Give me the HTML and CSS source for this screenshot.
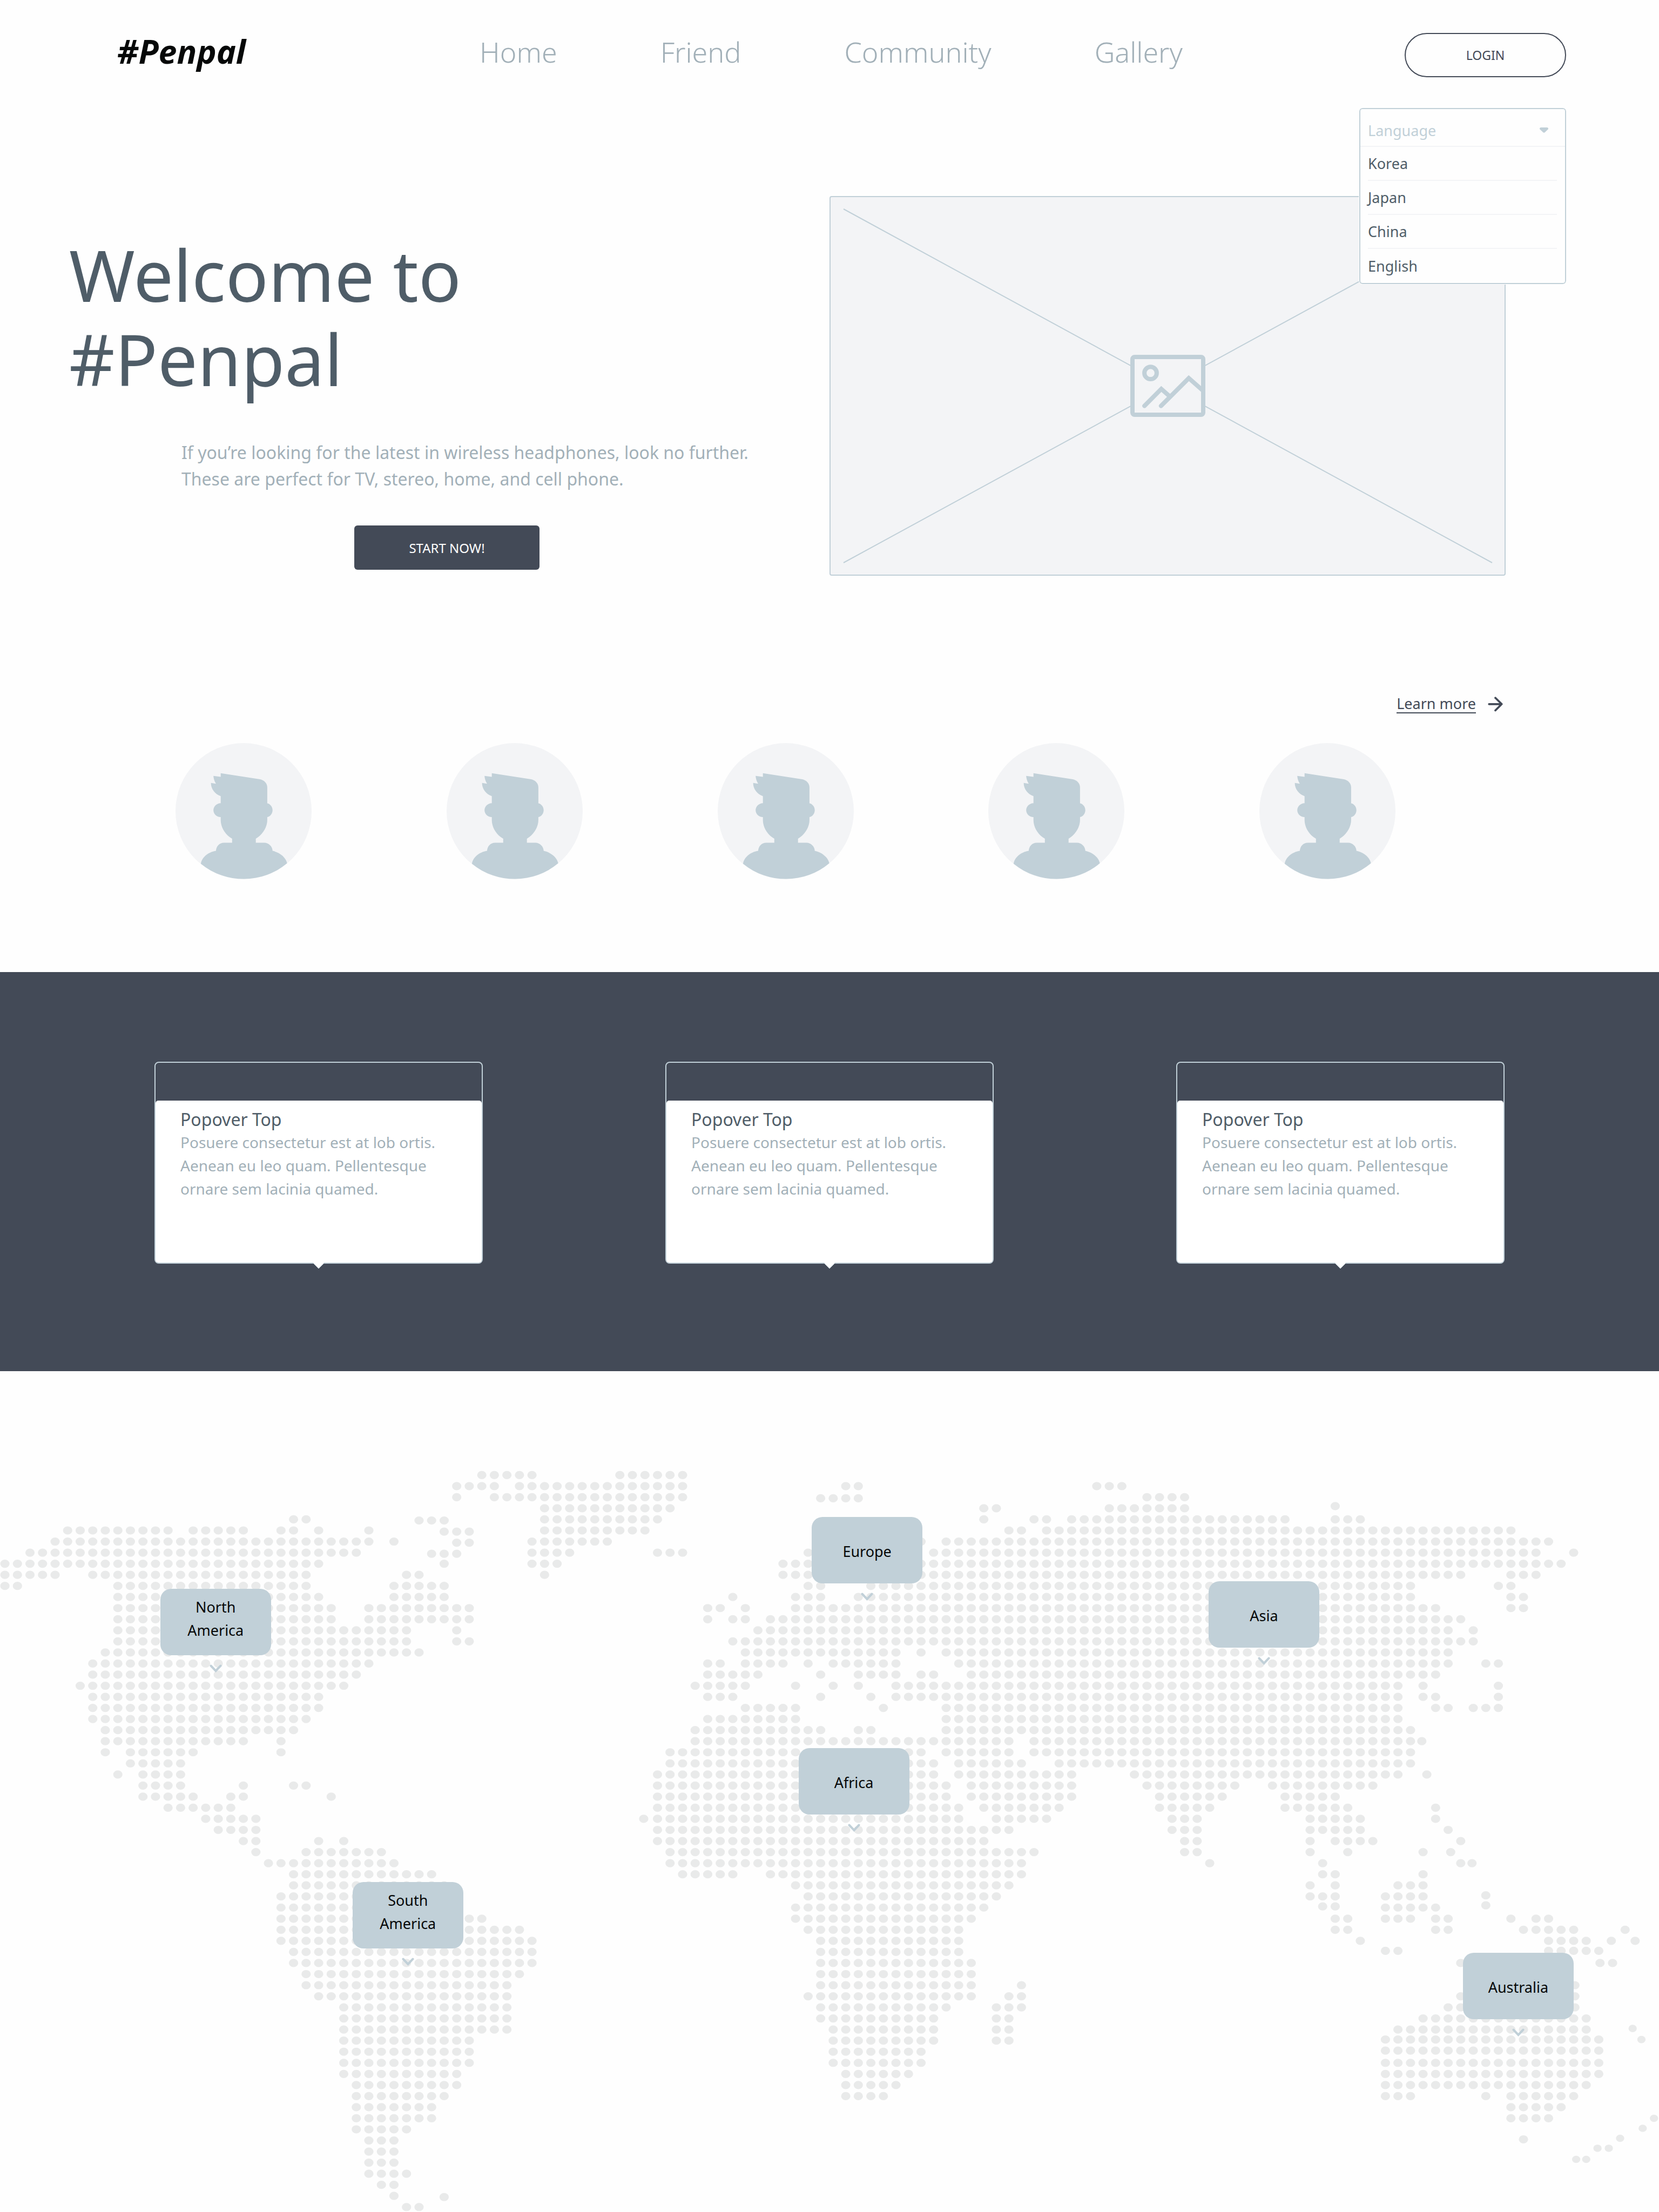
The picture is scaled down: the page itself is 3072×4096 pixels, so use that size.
FILE: index.html
```html
<!DOCTYPE html>
<html lang="en">
<head>
<meta charset="utf-8">
<meta name="viewport" content="width=device-width, initial-scale=1">
<title>#Penpal</title>
<link rel="stylesheet" href="styles.css">
</head>
<body>
<svg class="sprite" aria-hidden="true">
  <symbol id="avatar" viewBox="0 0 252 252">
    <circle class="avatar-bg" cx="126" cy="126" r="126"/>
    <path class="avatar-person" d="M83.7 55.8 156.5 66.9C164 68.500 169.900 74 169.900 81.800V111.400C175.500 112.500 179.700 118 179.700 124.200S175.500 136 169.900 136.900V142.500C169.900 155 162 169 148.700 177.100V184.400H164.700C172 184.400 179.700 191 179.700 199.600C192 202 204.500 211 206.600 222.600A126 126 0 0 1 47 223.600C48.500 212 60 202 74.900 199.600C75.500 191 81 184.400 89.900 184.400H104.800V177.100C91 169 83.700 155 83.700 142.500V137.100C76 137 70.200 131 70.200 124.200S76 111.500 83.700 111.200V98.200C73 94.500 65.600 85 65.600 73.700L74.900 75.200C72 70.500 70.500 66 70.200 60.700L83.700 62.400Z"/>
  </symbol>
  <symbol id="chevron" viewBox="0 0 23 15">
    <path d="M2.500 2.500 11.500 12 20.500 2.500" fill="none" stroke="currentColor" stroke-width="4" stroke-linecap="round"/>
  </symbol>
</svg>

<header class="header">
  <a class="logo" href="#">#Penpal</a>
  <nav class="nav" aria-label="Main">
    <a href="#">Home</a>
    <a href="#">Friend</a>
    <a href="#">Community</a>
    <a href="#">Gallery</a>
  </nav>
  <button class="login" type="button">LOGIN</button>

  <div class="language">
    <div class="language-head">
      <select class="language-select" aria-label="Language">
        <option>Language</option>
      </select>
      <svg class="caret" viewBox="0 0 16 10" aria-hidden="true"><path d="M2 0H14Q17 1 15.500 3.500L10 8.800Q8 10.500 6 8.800L.5 3.500Q-1 1 2 0Z"/></svg>
    </div>
    <ul class="language-list">
      <li><button type="button">Korea</button></li>
      <li><button type="button">Japan</button></li>
      <li><button type="button">China</button></li>
      <li><button type="button">English</button></li>
    </ul>
  </div>
</header>

<main>
  <section class="hero">
    <div class="hero-text">
      <h1>Welcome to<br>#Penpal</h1>
      <p>If you’re looking for the latest in wireless headphones, look no further. These are perfect for TV, stereo, home, and cell phone.</p>
      <button class="start" type="button">START NOW!</button>
    </div>
    <svg class="hero-image" viewBox="0 0 1252 703" role="img" aria-label="Image placeholder">
      <rect class="frame" x="1" y="1" width="1250" height="701" rx="3"/>
      <path class="thin" d="M26 24 1227 679M26 679 1227 24"/>
      <g class="thick">
        <rect class="frame-inner" x="561" y="298" width="131" height="107" rx="4"/>
        <circle cx="594.500" cy="327.700" r="11.400"/>
        <path d="M583.200 388.600 614.400 357.200 630 371M613.900 388.600 665.300 337.300 690 359"/>
      </g>
    </svg>
  </section>

  <section class="people" aria-label="Members">
    <a class="more" href="#"><span>Learn more</span>
      <svg viewBox="0 0 112 110" aria-hidden="true"><path d="M9 54H102M56 8 103 54 56 101"/></svg>
    </a>
    <ul class="avatars">
      <li><svg role="img" aria-label="Member"><use href="#avatar"/></svg></li>
      <li><svg role="img" aria-label="Member"><use href="#avatar"/></svg></li>
      <li><svg role="img" aria-label="Member"><use href="#avatar"/></svg></li>
      <li><svg role="img" aria-label="Member"><use href="#avatar"/></svg></li>
      <li><svg role="img" aria-label="Member"><use href="#avatar"/></svg></li>
    </ul>
  </section>

  <section class="popovers">
    <article class="popover">
      <div class="popover-body">
        <h2>Popover Top</h2>
        <p>Posuere consectetur est at lob ortis. Aenean eu leo quam. Pellentesque ornare sem lacinia quamed.</p>
      </div>
      <svg class="popover-tip" viewBox="0 0 22 12" aria-hidden="true"><path d="M0 0 11 11 22 0"/></svg>
    </article>
    <article class="popover">
      <div class="popover-body">
        <h2>Popover Top</h2>
        <p>Posuere consectetur est at lob ortis. Aenean eu leo quam. Pellentesque ornare sem lacinia quamed.</p>
      </div>
      <svg class="popover-tip" viewBox="0 0 22 12" aria-hidden="true"><path d="M0 0 11 11 22 0"/></svg>
    </article>
    <article class="popover">
      <div class="popover-body">
        <h2>Popover Top</h2>
        <p>Posuere consectetur est at lob ortis. Aenean eu leo quam. Pellentesque ornare sem lacinia quamed.</p>
      </div>
      <svg class="popover-tip" viewBox="0 0 22 12" aria-hidden="true"><path d="M0 0 11 11 22 0"/></svg>
    </article>
  </section>

  <section class="world" aria-label="Regions">
    <div class="map">
      <!-- One unit per dot: each run is a row of round dashes. -->
      <svg class="dots" viewBox="-0.39 -0.55 132.190 67" preserveAspectRatio="none" aria-hidden="true">
        <path d="
M38 0h4.100M49 0h5.100
M36 1h3.100M41 1h13.100M67 1h1.100M87 1h2.100
M36 2h.1M39 2h15.100M65 2.100h3.100M91 2h3.100
M43 3h10.100M78 3h1.100M88 3h6.100M106 2.800h.1
M23 4h1.100M33 4.100h2.100M43 4h9.100M78 4h.1M82 4h1.100M85 4h17.100M106 4h2.100
M5 5h8.100M15 5h4.100M22 5h1.100M25 5h.1M29 5h.1M35 5.100h2.100M43 5h8.100M80 5h1.100M83 5h37.100
M4 6h25.100M31 6h.1M36 6.100h1.100M42 6h6.100M73 6h.1M75 6h48.100
M2 7h26.100M34 7.100h2.100M42 7h3.100M52 7h2.100M64 7h.1M74 7h48.100M125 7h.1
M0 8h25.100M35 8h.1M42 8h2.100M62 8h2.100M73 8h51.100
M0 9h4.100M7 9h17.100M32 9h1.100M43 9h.1M62 9h2.100M73 9h43.100M120 9h2.100
M0 10h1.100M9 10h15.100M31 10h4.100M64 10h1.100M69 10h43.100M119 10h1.100
M9 11h16.100M31 11h4.100M58 11h.1M63 11h2.100M68 11h44.100M120 11h1.100
M9 12h17.100M29 12h8.100M56 12h1.100M59 12h.1M63 12h51.100M120 12h1.100
M9 13h17.100M29 13h8.100M56 13h.1M58 13h1.100M61 13h55.100
M9 14h23.100M36 14h.1M60 14h55.100M117 14h.1
M9 15h23.100M36 15h1.100M58 15h59.100
M8 16h25.100M59 16h12.100M73 16h.1M75 16h40.100
M7 17h22.100M56 17h1.100M59 17h3.100M64 17h.1M66 17h5.100M76 17h39.100M118 17h1.100
M7 18h21.100M56 18h4.100M65 18h.1M68 18h3.100M73 18h1.100M77 18h37.100
M6 19h21.100M55 19h4.100M63 19h.1M66 19h.1M68 19h.1M71 19h40.100M113 19h.1M119 19h.1
M7 20h18.100M56 20h2.100M65 20h.1M69 20h.1M71 20h40.100M113 20h1.100M119 20h.1
M7 21h18.100M59 21h4.100M70 21h.1M75 21h36.100M114 21h1.100M117 21h2.100
M7 22h17.100M56 22h7.100M75 22h36.100
M8 23h15.100M55 23h10.100M68 23h1.100M75 23h37.100
M8 24h11.100M22 24h.1M55 24h19.100M75 24h5.100M82 24h30.100M112.900 24h.1
M8 25h.1M10 25h5.100M22 25h.1M53 25h20.100M75 25h5.100M82 25h30.100
M10 26h4.100M53 26h21.100M76 26h5.100M84 26h28.100
M9 27h.1M11 27h3.100M52 27h22.100M76 27h9.100M90 27h21.100M113.300 27h.1
M11 28h3.100M19 28h.1M23 28h1.100M52 28h23.100M77 28h8.100M91 28h7.100M101 28h8.100
M11 29h4.100M18 29h1.100M26 29h.1M52 29h23.100M77 29h8.100M92 29h5.100M102 29h4.100
M13 30h5.100M52 30h24.100M78 30h6.100M92 30h4.100M102 30h5.100M114 30h.1
M16 31h4.100M50.900 31h.1M52 31h24.100M79 31h4.100M93 31h2.100M104 31h4.100M114 31h.1
M17 32h3.100M52 32h28.100M93 32h2.100M104 32h4.100M115 32h.1
M19 33h1.100M25 33h.1M27 33h.1M52 33h26.100M94 33h1.100M104 33h.1M106 33h3.100M116 33h.1
M20 34h.1M24 34h6.100M53 34h29.100M94 34h1.100M104 34h.1M107 34h.1M113 34h.1M115.200 34h.1
M21 35h10.100M53 35h28.100M96 35h.1M105 35h.1M116 35h.9M116.900 35h.1
M23 36h11.100M54 36h4.100M61 36h20.100M105 36h1.100M113 36h.1
M23 37h12.100M63 37h17.100M104 37h.1M106 37h.1M111 37h2.100
M22 38h13.100M64 38h15.100M104 38h2.100M110 38h3.100M118 37.900h.1
M22 39h13.100M63 39h15.100M105 38.900h1.100M110 39h4.100M118 38.800h.1
M22 40h16.100M63 40h14.100M106 40h1.100M110 40h2.100M114 40h1.100M120 40h.1M122 40h1.100
M22 41h19.100M64 41h12.100M106 41h1.100M114 41h1.100M121 41h4.100M129.100 41h.1
M22 42h20.100M65 42h11.100M108 42h.1M123 42h3.100M128 42h.1M129.900 42h.1
M23 43h19.100M65 43h11.100M110 42.900h1.100M123 42.900h4.100
M23 44h19.100M65 44h12.100M116 44h.1M127.100 44h1.100
M24 45h17.100M65 45h12.100
M24 46h16.100M65 46h12.100M81 46h.1M125.100 46h.1
M25 47h15.100M64 47h13.100M80 47h1.100M116 47h.1M125.100 47h.1
M27 48h13.100M65 48h10.100M79 48h2.100M115 48h1.100M125.100 48h.1
M27 49h13.100M65 49h9.100M79 49h1.100M113 49h13.100
M27 50h13.100M66 50h8.100M79 50h1.100M111 50h15.100
M27 51h10.100M66 51h8.100M79 51h1.100M110 50.900h17.100
M27 52h10.100M66 52h7.100M110 51.900h17.100
M27 53h10.100M66 53h7.100M110 53h17.100
M27 54h9.100M67 54h5.100M110 54h17.100
M28 55h8.100M67 55h4.100M110 55h16.100
M28 56h7.100M67 56h3.100M110 56h2.100M118 56h.1M120 56h5.100
M28 57h6.100M120 57h4.100
M28 58h6.100M120 58h3.100
M28 59h4.100
M29 60h2.100M121 59.900h.1
M29 61h2.100
M29 62h2.100
M29 63h3.100
M30 64h1.100
M31 65h.1M35 65.100h.1
M32 66h1.100"/>
        <path class="dots-small" d="M129.700 49.900h.1M130.400 50.900h.1M131.400 58h.1M130.500 58.900h.1M128.700 59.800h.1M126.900 60.700h.1M127.800 60.700h.1M125.200 61.700h.1M126 61.700h.1"/>
      </svg>

      <div class="pin pin-north-america"><button type="button">North<br>America</button><svg aria-hidden="true"><use href="#chevron"/></svg></div>
      <div class="pin pin-europe"><button type="button">Europe</button><svg aria-hidden="true"><use href="#chevron"/></svg></div>
      <div class="pin pin-asia"><button type="button">Asia</button><svg aria-hidden="true"><use href="#chevron"/></svg></div>
      <div class="pin pin-africa"><button type="button">Africa</button><svg aria-hidden="true"><use href="#chevron"/></svg></div>
      <div class="pin pin-south-america"><button type="button">South<br>America</button><svg aria-hidden="true"><use href="#chevron"/></svg></div>
      <div class="pin pin-australia"><button type="button">Australia</button><svg aria-hidden="true"><use href="#chevron"/></svg></div>
    </div>
  </section>
</main>
</body>
</html>
```
FILE: styles.css
```css
:root {
  --ink: #4f5d68;
  --navy: #434a57;
  --mist: #c1d0d8;
  --muted: #a2b0b8;
  --paper: #fefefe;
  --panel: #f3f4f6;
}

* { box-sizing: border-box; }

body {
  margin: 0;
  background: var(--paper);
  color: var(--ink);
  font-family: "Noto Sans", "Open Sans", sans-serif;
}

h1, h2, p, ul { margin: 0; padding: 0; font-weight: 400; }
ul { list-style: none; }
a { color: inherit; text-decoration: none; }
button, select { margin: 0; padding: 0; border: 0; background: none; color: inherit; font: inherit; cursor: pointer; }
svg { display: block; }
.sprite { position: absolute; width: 0; height: 0; }

/* Header */
.header {
  position: relative;
  display: flex;
  align-items: flex-start;
  padding: 61px 172px 0 217px;
}
.logo {
  margin-right: 433px;
  color: #060808;
  font-size: 61px;
  font-style: italic;
  font-weight: 700;
  line-height: 68px;
}
.nav {
  display: flex;
  gap: 191px;
  color: var(--muted);
  font-size: 52px;
  font-weight: 300;
  line-height: 70px;
}
.login {
  width: 299px;
  height: 82px;
  margin-left: auto;
  border: 2px solid var(--navy);
  border-radius: 41px;
  color: var(--navy);
  font-size: 23px;
}

/* Language menu, open over the hero */
.language {
  position: absolute;
  z-index: 1;
  top: 200px;
  right: 172px;
  width: 383px;
  border: 2px solid var(--mist);
  border-radius: 6px;
  outline: 1px solid var(--paper);
  background: var(--paper);
  font-size: 27px;
}
.language-head {
  display: flex;
  align-items: center;
  padding-right: 31px;
  border-bottom: 2px solid var(--panel);
}
.language-select {
  flex: 1;
  height: 68px;
  padding: 10px 0 0 14px;
  appearance: none;
  color: var(--mist);
}
.caret { width: 16px; height: 10px; margin-top: 10px; fill: var(--mist); }
.language-list { padding: 0 15px 0 14px; }
.language-list li { height: 63px; border-bottom: 2px solid var(--panel); }
.language-list li:last-child { border-bottom: 0; }
.language-list button { width: 100%; height: 100%; text-align: left; }

/* Hero */
.hero {
  display: grid;
  grid-template-columns: 1408fr 1252fr;
  align-items: start;
  padding: 220px 284px 0 128px;
}
.hero-text { padding-top: 67px; }
.hero h1 { font-size: 131px; line-height: 156px; }
.hero p {
  max-width: 1280px;
  margin-top: 71px;
  padding-left: 208px;
  color: var(--muted);
  font-size: 32px;
  line-height: 49px;
}
.start {
  display: block;
  width: 343px;
  height: 82px;
  margin: 62px 0 0 528px;
  border-radius: 6px;
  background: var(--navy);
  color: var(--paper);
  font-size: 24px;
}
.hero-image { width: 100%; }
.frame { fill: var(--panel); stroke: var(--mist); stroke-width: 2; }
.thin { stroke: var(--mist); stroke-width: 2; }
.thick { fill: none; stroke: var(--mist); stroke-width: 8; stroke-linecap: round; }
.frame-inner { fill: var(--panel); }

/* Members */
.people { padding: 220px 289px 172px; }
.more {
  display: flex;
  align-items: center;
  gap: 22px;
  width: max-content;
  margin-left: auto;
  color: var(--navy);
  font-size: 27px;
  line-height: 33px;
}
.more span { border-bottom: 2px solid; }
.more svg { width: 28px; height: 28px; fill: none; stroke: currentColor; stroke-width: 15; stroke-linecap: round; stroke-linejoin: round; }
.avatars {
  display: flex;
  justify-content: space-between;
  margin-top: 55px;
  padding: 0 199px 0 36px;
}
.avatars svg { width: 252px; height: 252px; }
.avatar-bg { fill: var(--panel); }
.avatar-person { fill: var(--mist); }

/* Popovers */
.popovers {
  display: grid;
  grid-template-columns: repeat(3, 1fr);
  gap: 338px;
  padding: 166px 286px 199px;
  background: var(--navy);
}
.popover {
  position: relative;
  padding-top: 70px;
  border: 2px solid var(--mist);
  border-radius: 8px;
}
.popover-body {
  min-height: 300px;
  padding: 14px 46px;
  border-radius: 5px;
  background: #fff;
}
.popover h2 { font-size: 32px; line-height: 42px; }
.popover p { color: var(--muted); font-size: 28px; line-height: 43px; }
.popover-tip {
  position: absolute;
  top: 100%;
  left: 50%;
  width: 22px;
  height: 12px;
  margin-left: -11px;
  fill: #fff;
  stroke: var(--mist);
  stroke-width: 1;
}

/* Dotted world map */
.world { padding-top: 181px; }
.map { position: relative; }
.dots {
  width: 100%;
  aspect-ratio: 3072 / 1376;
  fill: none;
  stroke: #e9eaea;
  stroke-width: .74;
  stroke-linecap: round;
  stroke-dasharray: 0 1;
}
.dots-small { stroke-width: .66; }
.pin {
  position: absolute;
  display: flex;
  flex-direction: column;
  align-items: center;
  gap: 17px;
  color: var(--mist);
}
.pin button {
  width: 205px;
  height: 123px;
  padding-top: 4px;
  border-radius: 20px;
  background: var(--mist);
  color: #060808;
  font-size: 27px;
  line-height: 43px;
}
.pin svg { width: 23px; height: 15px; }
.pin-north-america button, .pin-south-america button { padding: 0 0 13px; }
.pin-north-america { top: 16.100%; left: 9.660%; }
.pin-europe { top: 6.500%; left: 48.930%; }
.pin-asia { top: 15.150%; left: 72.850%; }
.pin-africa { top: 37.600%; left: 48.130%; }
.pin-south-america { top: 55.600%; left: 21.250%; }
.pin-australia { top: 65.100%; left: 88.180%; }
```
